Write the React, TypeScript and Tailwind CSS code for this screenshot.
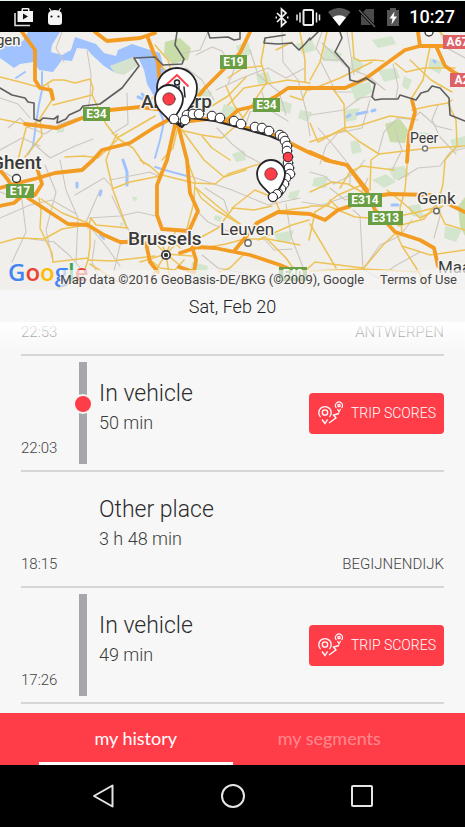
import React from "react";

const grayRoads = [
  "M0 98 L18 104 L30 118", "M8 128 L20 118 L30 128 L45 134 L60 124 L78 118", "M33 143 L50 158 L75 146 L93 139", "M62 32 L56 48 L64 62",
  "M87 50 L91 75 L90 98", "M90 98 L88 108", "M127 93 L128 124 L112 134", "M0 150 L22 138 L40 146", "M60 160 L66 190 L78 218 L76 262",
  "M75 195 L104 178 L112 187", "M45 165 L56 192 L46 230 L52 258", "M0 192 L22 200 L26 232 L12 262", "M0 218 L30 205 L52 200 L76 214",
  "M100 190 L86 222 L106 246 L120 266", "M88 218 L120 216 L138 212 L156 216", "M110 180 L150 172 L158 176", "M24 238 L54 242 L70 256 L82 270",
  "M95 240 L92 262 L104 288", "M114 271 L120 245 L140 232", "M196 55 L212 47 L222 51 L234 70 L228 84", "M216 90 L242 78 L268 68 L286 78 L305 68",
  "M250 50 L258 75 L279 92 L286 115", "M262 92 L266 108 L288 121", "M186 68 L202 80 L214 100", "M282 32 L283 62 L298 80 L306 110 L310 136",
  "M217 128 L232 144 L247 156 L266 166", "M190 176 L232 190 L268 205 L300 198", "M196 210 L208 222 L234 234 L262 226", "M205 188 L224 200 L228 212",
  "M286 204 L291 236 L304 270", "M320 60 L328 76 L336 92 L352 92", "M322 43 L348 68 L368 76 L385 90", "M310 115 L344 110 L360 98 L374 96",
  "M347 32 L351 56 L354 75", "M393 64 L398 86 L396 98", "M370 100 L362 128 L338 133 L326 146 L320 164", "M378 154 L384 132 L398 118 L418 120",
  "M318 128 L334 146 L350 166 L350 184", "M411 121 L420 112 L436 126 L452 130", "M398 180 L418 168 L440 166 L450 152 L465 148",
  "M310 172 L324 176 L334 184 L353 174 L365 160", "M353 210 L360 216 L363 269", "M363 269 L380 245 L400 236 L412 220", "M363 269 L378 278 L395 266 L420 252",
  "M330 188 L345 200 L360 196 L368 178", "M440 192 L440 216 L434 238", "M438 105 L432 120 L440 137 L456 154", "M302 202 L322 205 L348 196",
  "M202 255 L218 268 L248 274", "M262 237 L274 250 L292 249", "M440 32 L447 48 L465 58", "M0 170 L18 180", "M208 32 L200 50 L180 54",
  "M112 196 L125 224 L134 240", "M244 130 L250 112 L272 104", "M322 32 L316 48 L324 60 L344 60", "M395 130 L402 150 L392 170",
];

const yellowRoads = [
  "M0 77 L20 82 L38 87", "M42 87 L53 80 L64 80 L75 83 L90 79 L93 88 L92 95 L106 124 L117 138 L133 148 L144 164",
  "M53 105 L92 95", "M48 85 L52 100 L40 118 L42 136 L25 157", "M40 120 L26 128 L18 160", "M117 138 L155 116", "M117 134 L112 144 L106 160 L113 190 L127 228",
  "M65 157 L84 156 L98 158 L117 140", "M0 119 L25 124", "M39 198 L41 212 L40 228 L52 253 L53 262", "M0 243 L18 238 L44 239 L62 229 L80 226",
  "M88 228 L91 218 L96 225 L128 228", "M90 228 L90 246 L88 260 L82 278 L60 288", "M88 260 L112 261 L155 256", "M41 199 L62 213 L88 223",
  "M112 189 L130 182 L160 176", "M140 160 L150 166 L160 175", "M155 96 L142 106 L130 109", "M90 264 L118 282", "M53 262 L88 258",
  "M155 45 L168 60 L172 75", "M246 77 L228 96 L186 122", "M265 40 L261 62 L267 82 L243 118", "M243 118 L234 105 L226 86",
  "M158 174 L194 183 L215 184 L228 174 L256 165 L270 162", "M187 160 L195 181 L194 202 L186 232", "M180 130 L202 135 L222 138 L240 122",
  "M202 136 L212 148 L230 160", "M196 188 L215 204 L240 224", "M240 224 L216 210 L201 198 L196 188", "M182 130 L204 160 L224 177 L246 170",
  "M196 240 L218 228 L233 208 L254 210 L272 206", "M198 249 L226 244 L244 239 L268 239 L300 245", "M274 198 L280 211 L309 207",
  "M274 198 L255 190 L232 208", "M258 240 L292 225 L309 220", "M266 238 L286 258 L305 285", "M243 255 L230 268 L218 272",
  "M288 88 L310 90 L340 78 L372 62", "M290 96 L302 100 L309 86", "M228 105 L244 88 L288 80 L310 83", "M300 32 L305 60 L305 82",
  "M292 42 L276 50", "M352 32 L354 58 L360 61 L374 60 L384 61", "M327 32 L320 62 L310 80", "M310 123 L318 142 L344 128 L358 126 L390 116 L415 119",
  "M333 89 L344 104 L345 130 L310 142", "M345 130 L360 142 L379 154 L430 148 L465 146", "M379 154 L371 160 L370 190", "M395 63 L406 72 L424 68 L455 68",
  "M430 47 L423 80 L411 99", "M412 110 L430 106 L448 103 L452 100", "M448 103 L456 120 L457 146 L445 160 L443 184 L440 196",
  "M407 165 L405 190 L400 208 L402 234", "M310 206 L328 206 L330 200 L340 210 L350 208", "M330 203 L315 212 L309 240",
  "M310 192 L332 182 L348 184 L365 194", "M328 206 L355 217 L385 219 L418 212 L434 208", "M387 190 L402 202 L420 218 L443 206",
  "M396 233 L402 246 L415 266 L428 288", "M396 233 L384 244 L363 269", "M310 271 L363 269 L420 272", "M402 246 L430 255 L465 250",
  "M434 200 L445 224 L465 230", "M330 201 L338 195 L364 184", "M304 272 L315 262 L363 268", "M398 226 L424 219 L440 200",
  "M178 126 L173 148 L162 160", "M160 64 L172 78 L158 96", "M228 78 L243 68 L262 66", "M340 188 L350 172 L362 166 L394 170",
  "M166 254 L150 238", "M166 254 L158 234", "M166 254 L176 230", "M166 254 L184 236", "M166 254 L192 256", "M166 254 L188 272",
  "M166 254 L170 280", "M166 254 L152 276", "M166 254 L140 262", "M148 258 L160 268 L175 270 L184 260", "M155 242 L172 240 L180 248",
  "M410 60 L431 80 L452 92", "M454 46 L440 32", "M310 224 L322 244 L336 268",
];

const motorways = [
  "M22 32 L35 50 L35 80 L40 88 L51 90 L53 99", "M95 32 L107 41 L140 38 L155 33", "M148 38 L154 54 L160 66",
  "M25 124 L57 128 L82 118 L110 110 L140 107 L165 110", "M0 188 L14 184 L38 178 L55 173 L82 170 L93 160 L102 150 L130 143 L155 127 L172 118",
  "M0 170 L8 180 L14 190", "M37 168 L42 184 L35 195 L26 190", "M0 206 L14 203 L22 196", "M28 198 L68 224 L88 225 L104 235 L120 242 L138 242",
  "M250 32 L240 53 L205 88 L186 112 L176 122", "M158 62 L160 86 L164 110 L175 122",
  "M225 122 L238 110 L260 105 L275 97 L288 88 L310 88 L345 88 L365 79 L405 50 L420 46 L450 46",
  "M182 122 L215 118 L238 126 L270 133 L290 143 L310 153 L330 161 L347 165 M330 161 L347 165 L358 180 L367 192 L375 210 L395 232 L420 240 L434 248 L438 266",
  "M257 223 L278 212 L310 214 L325 220 L338 210 L350 206 L362 198 L390 194 L430 195 L465 212",
  "M310 152 L328 160", "M325 160 L347 165 L367 190",
  "M180 253 L198 247 L215 248 L250 255 L280 265 L296 272", "M235 250 L257 223",
  "M178 125 L187 160 L190 193 L198 211 L189 231 L162 229 L157 215 L157 185 L167 160 L175 125",
  "M192 247 L196 260 L194 272 L179 267", "M146 243 L150 262 L158 272", "M418 32 L420 46", "M436 46 L445 66 L455 73 L465 78",
  "M412 100 L415 112 L409 135 L407 162",
];

const borders = [
  "M0 88 L12 95 L25 98 L28 102 L34 103 L34 119 L40 121 L43 118 L54 119 L58 116 L57 123 L66 119 L69 115 L80 110 L83 106 L100 104 L122 88 L139 66 L134 58 L155 57 L163 65 L182 64 L184 59 L175 45 L177 32",
  "M208 32 L210 38 L228 37 L234 40 L240 39 L240 32", "M285 35 L265 38 L264 43 L278 44 L292 43 L299 50 L305 44 L310 38", "M310 40 L318 32",
  "M340 32 L342 38 L335 52 L349 68 L350 80 L358 82 L366 78 L375 84 L372 97 L375 100 L382 99 L398 99 L400 95 L416 100 L421 93 L428 91 L432 86 L440 88 L449 98 L450 115 L465 121",
];

const forests = [
  "M165 42 L180 38 L191 48 L188 60 L172 64 L164 54Z", "M110 66 L134 57 L137 66 L124 74 L114 70Z", "M385 124 L400 119 L408 130 L405 143 L390 142Z",
  "M458 206 L465 197 L465 236 L460 226Z",
];

const parks = [
  "M196 88 L212 92 L208 104 L198 100Z", "M224 104 L236 108 L232 120 L220 116Z", "M256 74 L268 72 L272 82 L258 84Z", "M236 46 L248 42 L252 54 L240 58Z",
  "M280 100 L292 104 L290 114 L278 110Z", "M296 44 L312 40 L316 50 L302 54Z", "M352 56 L364 64 L358 74 L350 68Z", "M325 46 L342 54 L338 62 L322 60Z",
  "M350 86 L370 82 L372 92 L356 102Z", "M378 70 L396 68 L400 78 L384 82Z", "M430 58 L444 62 L440 74 L428 68Z", "M372 40 L392 36 L396 44 L378 48Z",
  "M344 110 L360 108 L356 120 L346 122Z", "M388 168 L404 166 L410 176 L394 180Z", "M420 132 L436 134 L430 142 L420 140Z", "M314 178 L328 176 L326 188 L312 186Z",
  "M350 142 L358 140 L362 152 L352 154Z", "M445 226 L462 230 L456 242 L444 238Z", "M408 206 L420 204 L424 218 L412 216Z", "M290 192 L300 190 L296 200 L288 198Z",
  "M274 234 L294 230 L290 242 L278 242Z", "M215 215 L222 217 L220 222 L214 220Z", "M192 262 L208 266 L206 280 L190 276Z", "M232 154 L244 150 L246 160 L236 162Z",
  "M57 130 L64 128 L64 132 L57 133Z", "M372 180 L386 174 L396 182 L384 188Z", "M120 222 L126 224 L120 226Z", "M132 196 L138 198 L134 202Z", "M300 110 L312 112 L308 122 L298 118Z",
  "M404 76 L412 80 L408 90 L402 86Z", "M450 140 L465 136 L465 146 L454 150Z",
];

const stops: [number, number][] = [
  [187, 115], [193, 114], [199, 114], [212, 116], [220, 118], [234, 121], [241, 124], [255, 127], [262, 128], [269, 131],
  [280, 135], [283, 137], [285, 141], [287, 146], [287, 151], [288, 163], [289, 168], [290, 174], [286, 178], [284, 184], [281, 189], [278, 193], [273, 197],
  [174, 119], [185, 120],
];

function RoadLabel({ x, y, w, text, red }: { x: number; y: number; w: number; text: string; red?: boolean }) {
  return (
    <g>
      <rect x={x} y={y} width={w} height="14" fill={red ? "#dd6165" : "#6a9f43"} />
      <text x={x + w / 2} y={y + 11} textAnchor="middle" fontSize="12" fontWeight="700" fill="#fff">{text}</text>
    </g>
  );
}

function Pin({ x, y }: { x: number; y: number }) {
  return (
    <g transform={`translate(${x} ${y})`}>
      <path d="M2 24 C-1 17 -14 12 -14 0 A14 14 0 0 1 14 0 C14 10 6 16 2 24Z" fill="#fff" stroke="#25252b" strokeWidth="1.8" />
      <circle r="6.2" fill="#ff3d49" stroke="#56353a" strokeWidth="0.8" />
    </g>
  );
}

function MapView() {
  return (
    <section aria-label="Map" className="relative aspect-[465/258] w-full shrink-0 overflow-hidden bg-[#f1efeb]">
      <svg viewBox="0 32 465 258" className="block h-full w-full" fontFamily="Roboto, sans-serif" fill="none" strokeLinejoin="round" strokeLinecap="round">
        <g fill="#d3e5cd">{parks.map((d) => <path key={d} d={d} />)}</g>
        <g fill="#c9ddab">{forests.map((d) => <path key={d} d={d} />)}</g>
        <path d="M0 45 L12 44 L23 41 L28 32 L60 32 L52 45 L51 52 L62 55 L71 50 L75 37 L96 44 L104 53 L116 56 L118 50 L132 44 L141 47 L160 53 L166 78 L160 100 L154 96 L147 84 L144 70 L139 59 L134 57 L110 66 L115 73 L104 66 L92 55 L87 49 L77 48 L72 61 L62 60 L53 72 L39 70 L34 62 L20 64 L14 68 L0 58Z" fill="#a0c3ff" />
        <path d="M110 66 L134 57 L137 66 L124 75 L115 73Z" fill="#d5e2cd" />
        <g stroke="#a0c3ff" strokeWidth="2">
          <path d="M42 72 L42 90 L39 104 L36 124 L33 146 L28 154" /><path d="M36 42 L37 54" /><path d="M16 78 L25 72" />
          <path d="M138 97 L150 102 L142 94" strokeWidth="3" /><path d="M123 160 L127 172 L127 185" strokeWidth="3" /><path d="M77 183 L77 187 M101 191 L100 195" strokeWidth="3" />
          <path d="M155 100 L164 122 L160 140 L155 158" /><path d="M155 167 L172 172 L187 176" /><path d="M100 235 L104 239" />
          <path d="M347 117 L350 115 M357 114 L367 112 M372 111 L375 110 M392 205 L398 205 M434 61 L435 62" strokeWidth="3" />
        </g>
        <g stroke="#cdc7bf" strokeWidth="1.1">{grayRoads.map((d) => <path key={d} d={d} />)}</g>
        <g stroke="#edc358" strokeWidth="1.5">{yellowRoads.map((d) => <path key={d} d={d} />)}</g>
        <g stroke="#f39c23" strokeWidth="3.8">{motorways.map((d) => <path key={d} d={d} />)}</g>
        <g stroke="#5e5e5e" strokeWidth="1.6">{borders.map((d) => <path key={d} d={d} />)}</g>

        <RoadLabel x={83} y={107} w={27} text="E34" />
        <RoadLabel x={220} y={55} w={27} text="E19" />
        <RoadLabel x={253} y={98} w={27} text="E34" />
        <RoadLabel x={6} y={184} w={28} text="E17" />
        <RoadLabel x={348} y={193} w={34} text="E314" />
        <RoadLabel x={368} y={211} w={35} text="E313" />
        <RoadLabel x={279} y={267} w={28} text="E40" />
        <RoadLabel x={443} y={35} w={29} text="A67" red />
        <RoadLabel x={450} y={73} w={24} text="A2" red />

        <g stroke="#3b3b3b" strokeWidth="1.4" fill="#fff">
          <circle cx="16.5" cy="178.5" r="4" /><circle cx="429" cy="32" r="4" />
          <circle cx="248" cy="243" r="3.2" stroke="#666" /><circle cx="425" cy="148.5" r="2.5" stroke="#777" /><circle cx="436.5" cy="211" r="2.8" stroke="#666" />
          <circle cx="166" cy="255" r="4.2" strokeWidth="1.8" /><circle cx="166" cy="255" r="1.5" fill="#222" />
        </g>
        <g fill="#3a3a3a" stroke="#f7f5f1" strokeWidth="3" paintOrder="stroke">
          <text x="-9" y="45" fontSize="15">rgen</text>
          <text x="-9" y="169" fontSize="19" fontWeight="500">Ghent</text>
          <text x="141" y="108" fontSize="19" fontWeight="500">Antwerp</text>
          <text x="128" y="245" fontSize="19" fontWeight="500">Brussels</text>
          <text x="220" y="235" fontSize="17">Leuven</text>
          <text x="410" y="143" fontSize="14">Peer</text>
          <text x="417" y="204" fontSize="17">Genk</text>
          <text x="438" y="273" fontSize="17">Maastricht</text>
        </g>

        <path d="M173 121 L182 127 L190 118 L215 121 L245 129 L270 136 L284 142 L288 160 L286 177 L281 189 L273 199" stroke="#25252b" strokeWidth="2.2" />
        <path d="M180 126 C177 116 157 103 157 88 A20 20 0 0 1 197 88 C197 104 184 110 180 126Z" fill="#fff" stroke="#25252b" strokeWidth="1.8" />
        <path d="M166 85 L177 75 L188 86" stroke="#ff3d49" strokeWidth="1.8" />
        <path d="M172 91 L175 86 M184 87 L185 97 M179 86 L179 92" stroke="#25252b" strokeWidth="1.5" />
        <circle cx="177" cy="82.5" r="2.5" stroke="#25252b" strokeWidth="1.5" />
        <Pin x={169} y={99} />
        <g fill="#fff" stroke="#25252b" strokeWidth="1">
          {stops.map(([x, y]) => <circle key={`${x}-${y}`} cx={x} cy={y} r="4.8" />)}
          <circle cx="288" cy="157" r="4.8" fill="#ff3d49" />
        </g>
        <Pin x={271} y={174} />
        <g fill="#fff" stroke="#25252b" strokeWidth="1"><circle cx="277" cy="194" r="4.5" /><circle cx="273" cy="197" r="4.5" /></g>
      </svg>
      <div aria-label="Google" className="absolute bottom-0 left-2 font-['Open_Sans',sans-serif] text-2xl leading-9 font-semibold text-[#4285f4]">
        G<span className="text-[#ea4335]">o</span><span className="text-[#fbbc05]">o</span>g<span className="text-[#34a853]">l</span><span className="text-[#ea4335]">e</span>
      </div>
      <div className="absolute right-0 bottom-0 flex gap-4 bg-[#f5f5f5]/70 pr-2 text-[13px] leading-5 whitespace-nowrap text-[#444]">
        <span>Map data ©2016 GeoBasis-DE/BKG (©2009), Google</span>
        <a href="#terms">Terms of Use</a>
      </div>
    </section>
  );
}

function StatusBar() {
  return (
    <header className="flex h-8 shrink-0 items-center justify-between border-t border-[#e8f3f0] bg-black pr-2.5 pl-3.5 text-white">
      <div className="flex items-center gap-3">
        <svg width="20" height="20" viewBox="0 0 20 20" aria-label="Apps">
          <path d="M1 6v12.5h15" fill="none" stroke="#ddd" strokeWidth="1.6" />
          <path d="M3.500 4h4V2.200Q7.500 1 9 1h5q1.500 0 1.500 1.200V4h3.500v11H3.500Z M9 2.500V4h5V2.500Z" fill="#f4f4f4" fillRule="evenodd" />
          <path d="M9 6.500v6l5-3Z" fill="#111" />
        </svg>
        <svg width="18" height="20" viewBox="0 0 18 20" aria-label="Android">
          <path d="M2 8q0-3 2.500-4L3 1.500 3.800 1l1.700 2.400Q9 2.500 12.500 3.400L14.200 1l.8.500L13.500 4Q16 5 16 8v7q0 3-3 3H5q-3 0-3-3Z" fill="#f4f4f4" />
          <circle cx="5.500" cy="9.500" r="1.1" fill="#111" /><circle cx="12.500" cy="9.500" r="1.1" fill="#111" />
        </svg>
      </div>
      <div className="flex items-center">
        <svg width="128" height="24" viewBox="271 4 128 24" fill="none" aria-label="Bluetooth, vibrate, Wi-Fi, no SIM, charging">
          <path d="M277 12l9 9-4.500 4V8l4.500 4-9 9" stroke="#f2f2f2" strokeWidth="1.7" /><path d="M275.500 16.500h1.500M287 16.500h1.500" stroke="#f2f2f2" strokeWidth="2" />
          <rect x="303.500" y="9" width="9.500" height="15" rx="1" stroke="#ededed" strokeWidth="2" />
          <path d="M300 11.500v10M297 13.500v6M316.500 11.500v10M319.500 13.500v6" stroke="#ededed" strokeWidth="1.5" />
          <path d="M328 11q11-8 22.500 0L339.300 25Z" fill="#555" /><path d="M332.500 16.500q6.800-4.500 13.500 0L339.300 25Z" fill="#fff" />
          <path d="M366 8h8v16h-13V13Z" fill="#4b4b4b" /><path d="M359 9l16 17" stroke="#000" strokeWidth="3" /><path d="M359 9l16 17" stroke="#666" strokeWidth="1.3" />
          <path d="M387 9h3V7h6v2h3v16h-12Z" fill="#555" /><path d="M394.500 10.500l-5 7h3l-1 6 5.500-8h-3.200Z" fill="#fff" />
        </svg>
        <time className="pl-2.5 text-lg leading-6 font-medium">10:27</time>
      </div>
    </header>
  );
}

function TripButton() {
  return (
    <button className="flex h-[41px] items-center gap-2 rounded bg-[#ff3d49] px-2 text-sm font-light text-white">
      <svg width="26" height="24" viewBox="0 0 26 24" fill="none" stroke="currentColor" strokeWidth="1.3" aria-hidden="true">
        <circle cx="8" cy="11.500" r="2.700" /><path d="M3.500 16A6.200 6.200 0 1 1 12.500 16 M5 18.500l3 4 2.500-4" />
        <circle cx="22" cy="4.500" r="1.200" /><path d="M19.500 7A3.500 3.500 0 1 1 24.500 7 M20.500 8l1.500 3 1.500-3" strokeWidth="1.1" />
        <path d="M22 12.500l-5.500 1.500 2.500 3-3.500 2.500-3.500 2.500" />
      </svg>
      TRIP SCORES
    </button>
  );
}

interface Entry { time: string; title: string; length: string; place?: string; vehicle?: boolean; current?: boolean }

const entries: Entry[] = [
  { time: "22:53", title: "Other place", length: "10 h", place: "ANTWERPEN" },
  { time: "22:03", title: "In vehicle", length: "50 min", vehicle: true, current: true },
  { time: "18:15", title: "Other place", length: "3 h 48 min", place: "BEGIJNENDIJK" },
  { time: "17:26", title: "In vehicle", length: "49 min", vehicle: true },
];

function HistoryRow({ entry }: { entry: Entry }) {
  return (
    <li className="flex h-29 shrink-0 border-b-2 border-[#d6d6d7]">
      <time className="w-14 self-end pb-2.5 text-[15px] leading-6 font-light text-[#444]">{entry.time}</time>
      <div className="my-1.5 flex w-3 items-center justify-center">
        {entry.vehicle && (
          <div className="relative h-full w-2 bg-[#a7a7ab]">
            {entry.current && <span className="absolute top-8 -left-1.5 size-5 rounded-full border-2 border-[#f7f7f7] bg-[#ff3d49]" />}
          </div>
        )}
      </div>
      <div className="flex-1 pt-6 pl-2.5">
        <h2 className="text-[23px] leading-7 font-light text-[#2c2c2c]">{entry.title}</h2>
        <p className="text-lg leading-[30px] font-light text-[#3c3c3c]">{entry.length}</p>
      </div>
      {entry.vehicle ? <div className="flex items-center"><TripButton /></div> : <span className="self-end pb-2.5 text-[15px] leading-6 font-light text-[#444]">{entry.place}</span>}
    </li>
  );
}

export default function App() {
  return (
    <div className="flex h-screen flex-col overflow-hidden bg-[#f7f7f7] font-[Roboto,sans-serif]">
      <StatusBar />
      <MapView />
      <h1 className="h-8 shrink-0 text-center text-lg leading-[34px] font-light text-[#222]">Sat, Feb 20</h1>
      <main className="relative flex min-h-0 flex-1 flex-col justify-end overflow-hidden px-[21px] pb-[9px]">
        <ul className="flex flex-col">{entries.map((entry) => <HistoryRow key={entry.time} entry={entry} />)}</ul>
        <div className="pointer-events-none absolute inset-x-0 top-0 h-8 bg-linear-to-b from-white to-white/0" />
      </main>
      <nav className="flex h-13 shrink-0 bg-[#ff3d49] px-[39px] font-[Lato,sans-serif] text-lg">
        <button className="flex-1 border-b-3 border-white text-white">my history</button>
        <button className="flex-1 border-b-3 border-transparent text-white/40">my segments</button>
      </nav>
      <footer className="flex h-[62px] shrink-0 items-center justify-between bg-black px-[90px] text-[#e4e4e4]">
        <button aria-label="Back"><svg width="26" height="26" viewBox="0 0 26 26" fill="none" stroke="currentColor" strokeWidth="2" strokeLinejoin="round"><path d="M22.500 2.500v21L4 13Z" /></svg></button>
        <button aria-label="Home"><svg width="26" height="26" viewBox="0 0 26 26" fill="none" stroke="currentColor" strokeWidth="2"><circle cx="13" cy="13" r="11" /></svg></button>
        <button aria-label="Recent apps"><svg width="26" height="26" viewBox="0 0 26 26" fill="none" stroke="currentColor" strokeWidth="2"><rect x="3" y="3" width="20" height="20" rx="1" /></svg></button>
      </footer>
    </div>
  );
}
